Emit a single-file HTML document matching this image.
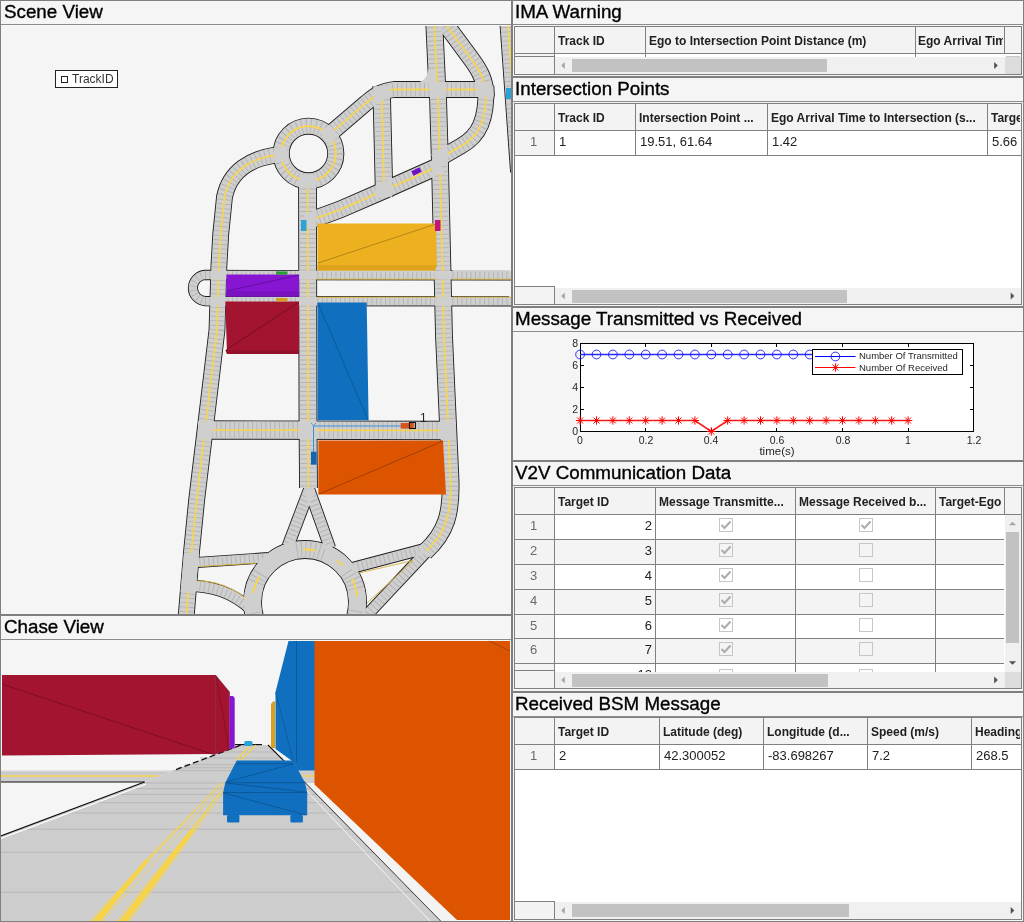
<!DOCTYPE html><html><head><meta charset="utf-8"><style>html,body{margin:0;padding:0;}body{width:1024px;height:922px;position:relative;overflow:hidden;background:#f5f5f5;font-family:"Liberation Sans",sans-serif;}div{box-sizing:border-box;}.t{position:absolute;white-space:nowrap;overflow:hidden;will-change:transform;padding-bottom:6px;}</style></head><body>
<svg style="position:absolute;left:0;top:0" width="1024" height="922"><defs><clipPath id="scl"><rect x="1" y="26" width="510" height="588"/></clipPath><mask id="m_T2" maskUnits="userSpaceOnUse" x="0" y="0" width="1024" height="922"><path d="M205,301.2 L512,301.3" fill="none" stroke="#fff" stroke-width="8.5"/></mask><mask id="m_R5" maskUnits="userSpaceOnUse" x="0" y="0" width="1024" height="922"><path d="M306,222 L340,209.6 L385,190 L441,165" fill="none" stroke="#fff" stroke-width="16"/></mask><mask id="m_TL" maskUnits="userSpaceOnUse" x="0" y="0" width="1024" height="922"><path d="M310,488 L288,546" fill="none" stroke="#fff" stroke-width="11"/></mask><mask id="m_U4" maskUnits="userSpaceOnUse" x="0" y="0" width="1024" height="922"><path d="M427,551 L366,616" fill="none" stroke="#fff" stroke-width="10.5"/></mask><mask id="m_T1" maskUnits="userSpaceOnUse" x="0" y="0" width="1024" height="922"><path d="M205,275 L512,275.3" fill="none" stroke="#fff" stroke-width="8.5"/></mask><mask id="m_R3b" maskUnits="userSpaceOnUse" x="0" y="0" width="1024" height="922"><path d="M486,86 C487,120 479,136 461,146 L435,161" fill="none" stroke="#fff" stroke-width="15"/></mask><mask id="m_R1" maskUnits="userSpaceOnUse" x="0" y="0" width="1024" height="922"><path d="M434,18 L437,82 L438,97 L440,165 L444,336 L450.5,480 C451.5,512 447,532 425,552" fill="none" stroke="#fff" stroke-width="16"/></mask><mask id="m_R7" maskUnits="userSpaceOnUse" x="0" y="0" width="1024" height="922"><path d="M198,430 L456,430.5" fill="none" stroke="#fff" stroke-width="17.5"/></mask><mask id="m_TR" maskUnits="userSpaceOnUse" x="0" y="0" width="1024" height="922"><path d="M308.6,488 L330,548" fill="none" stroke="#fff" stroke-width="10.5"/></mask><mask id="m_U1" maskUnits="userSpaceOnUse" x="0" y="0" width="1024" height="922"><path d="M186,563.2 L268,557.6" fill="none" stroke="#fff" stroke-width="9.2"/></mask><mask id="m_RB1" maskUnits="userSpaceOnUse" x="0" y="0" width="1024" height="922"><circle cx="308.5" cy="153.5" r="27.3" fill="none" stroke="#fff" stroke-width="15.3"/></mask><mask id="m_R3a" maskUnits="userSpaceOnUse" x="0" y="0" width="1024" height="922"><path d="M441,18 L472,60 C480,71 485,80 486,97" fill="none" stroke="#fff" stroke-width="16"/></mask><mask id="m_U3" maskUnits="userSpaceOnUse" x="0" y="0" width="1024" height="922"><path d="M424,549 L352,568" fill="none" stroke="#fff" stroke-width="10"/></mask><mask id="m_UT" maskUnits="userSpaceOnUse" x="0" y="0" width="1024" height="922"><path d="M206,274.9 A13.1,13.1 0 0 0 206,301.1" fill="none" stroke="#fff" stroke-width="8.3"/></mask><mask id="m_U2" maskUnits="userSpaceOnUse" x="0" y="0" width="1024" height="922"><path d="M186,586 C212,585.5 232,592 252,610" fill="none" stroke="#fff" stroke-width="10.5"/></mask><mask id="m_R4" maskUnits="userSpaceOnUse" x="0" y="0" width="1024" height="922"><path d="M381.5,86 L384.2,197" fill="none" stroke="#fff" stroke-width="16.5"/></mask></defs><g clip-path="url(#scl)"><rect x="1" y="25" width="510" height="589" fill="#f5f5f5"/><path d="M288,154 L273,155.5 C252,159 230,170 224.5,197 L220.7,234.5 L218.9,266 L217,330 L206.9,414.8 L196.7,499.6 L191.6,551 L186.6,611 L186.3,618" fill="none" stroke="#1e1e1e" stroke-width="16.8"/><circle cx="308.5" cy="153.5" r="27.3" fill="none" stroke="#1e1e1e" stroke-width="17.1"/><path d="M307.5,175 L308,420 L308.5,488" fill="none" stroke="#1e1e1e" stroke-width="18.8"/><path d="M310,488 L288,546" fill="none" stroke="#1e1e1e" stroke-width="12.8"/><path d="M308.6,488 L330,548" fill="none" stroke="#1e1e1e" stroke-width="12.3"/><path d="M324,139 L366,103 C374,96.5 380,91 394,89.5 L492,89.5" fill="none" stroke="#1e1e1e" stroke-width="16.8"/><path d="M434,18 L437,82 L438,97 L440,165 L444,336 L450.5,480 C451.5,512 447,532 425,552" fill="none" stroke="#1e1e1e" stroke-width="17.8"/><path d="M441,18 L472,60 C480,71 485,80 486,97" fill="none" stroke="#1e1e1e" stroke-width="17.8"/><path d="M486,86 C487,120 479,136 461,146 L435,161" fill="none" stroke="#1e1e1e" stroke-width="16.8"/><path d="M381.5,86 L384.2,197" fill="none" stroke="#1e1e1e" stroke-width="18.3"/><path d="M306,222 L340,209.6 L385,190 L441,165" fill="none" stroke="#1e1e1e" stroke-width="17.8"/><path d="M205,275 L512,275.3" fill="none" stroke="#1e1e1e" stroke-width="10.3"/><path d="M205,301.2 L512,301.3" fill="none" stroke="#1e1e1e" stroke-width="10.3"/><path d="M206,274.9 A13.1,13.1 0 0 0 206,301.1" fill="none" stroke="#1e1e1e" stroke-width="10.100000000000001"/><path d="M198,430 L456,430.5" fill="none" stroke="#1e1e1e" stroke-width="19.3"/><path d="M186,563.2 L268,557.6" fill="none" stroke="#1e1e1e" stroke-width="11.0"/><path d="M186,586 C212,585.5 232,592 252,610" fill="none" stroke="#1e1e1e" stroke-width="12.3"/><path d="M424,549 L352,568" fill="none" stroke="#1e1e1e" stroke-width="11.8"/><path d="M427,551 L366,616" fill="none" stroke="#1e1e1e" stroke-width="12.3"/><circle cx="305" cy="602" r="52.5" fill="none" stroke="#1e1e1e" stroke-width="18.8"/><path d="M507.5,18 L518.5,172" fill="none" stroke="#1e1e1e" stroke-width="16.8"/><path d="M288,154 L273,155.5 C252,159 230,170 224.5,197 L220.7,234.5 L218.9,266 L217,330 L206.9,414.8 L196.7,499.6 L191.6,551 L186.6,611 L186.3,618" fill="none" stroke="#cfcfcf" stroke-width="15"/><circle cx="308.5" cy="153.5" r="27.3" fill="none" stroke="#cfcfcf" stroke-width="15.3"/><path d="M307.5,175 L308,420 L308.5,488" fill="none" stroke="#cfcfcf" stroke-width="17"/><path d="M310,488 L288,546" fill="none" stroke="#cfcfcf" stroke-width="11"/><path d="M308.6,488 L330,548" fill="none" stroke="#cfcfcf" stroke-width="10.5"/><path d="M324,139 L366,103 C374,96.5 380,91 394,89.5 L492,89.5" fill="none" stroke="#cfcfcf" stroke-width="15"/><path d="M434,18 L437,82 L438,97 L440,165 L444,336 L450.5,480 C451.5,512 447,532 425,552" fill="none" stroke="#cfcfcf" stroke-width="16"/><path d="M441,18 L472,60 C480,71 485,80 486,97" fill="none" stroke="#cfcfcf" stroke-width="16"/><path d="M486,86 C487,120 479,136 461,146 L435,161" fill="none" stroke="#cfcfcf" stroke-width="15"/><path d="M381.5,86 L384.2,197" fill="none" stroke="#cfcfcf" stroke-width="16.5"/><path d="M306,222 L340,209.6 L385,190 L441,165" fill="none" stroke="#cfcfcf" stroke-width="16"/><path d="M205,275 L512,275.3" fill="none" stroke="#cfcfcf" stroke-width="8.5"/><path d="M205,301.2 L512,301.3" fill="none" stroke="#cfcfcf" stroke-width="8.5"/><path d="M206,274.9 A13.1,13.1 0 0 0 206,301.1" fill="none" stroke="#cfcfcf" stroke-width="8.3"/><path d="M198,430 L456,430.5" fill="none" stroke="#cfcfcf" stroke-width="17.5"/><path d="M186,563.2 L268,557.6" fill="none" stroke="#cfcfcf" stroke-width="9.2"/><path d="M186,586 C212,585.5 232,592 252,610" fill="none" stroke="#cfcfcf" stroke-width="10.5"/><path d="M424,549 L352,568" fill="none" stroke="#cfcfcf" stroke-width="10"/><path d="M427,551 L366,616" fill="none" stroke="#cfcfcf" stroke-width="10.5"/><circle cx="305" cy="602" r="52.5" fill="none" stroke="#cfcfcf" stroke-width="17"/><path d="M507.5,18 L518.5,172" fill="none" stroke="#cfcfcf" stroke-width="15"/><path d="M288,154 L273,155.5 C252,159 230,170 224.5,197 L220.7,234.5 L218.9,266 L217,330 L206.9,414.8 L196.7,499.6 L191.6,551 L186.6,611 L186.3,618" fill="none" stroke="#b3b3b3" stroke-width="14" stroke-dasharray="0.9 3.6"/><circle cx="308.5" cy="153.5" r="27.3" fill="none" stroke="#b3b3b3" stroke-width="14.3" stroke-dasharray="0.9 3.6"/><path d="M307.5,175 L308,420 L308.5,488" fill="none" stroke="#b3b3b3" stroke-width="16" stroke-dasharray="0.9 3.6"/><path d="M310,488 L288,546" fill="none" stroke="#b3b3b3" stroke-width="10" stroke-dasharray="0.9 3.6"/><path d="M308.6,488 L330,548" fill="none" stroke="#b3b3b3" stroke-width="9.5" stroke-dasharray="0.9 3.6"/><path d="M324,139 L366,103 C374,96.5 380,91 394,89.5 L492,89.5" fill="none" stroke="#b3b3b3" stroke-width="14" stroke-dasharray="0.9 3.6"/><path d="M434,18 L437,82 L438,97 L440,165 L444,336 L450.5,480 C451.5,512 447,532 425,552" fill="none" stroke="#b3b3b3" stroke-width="15" stroke-dasharray="0.9 3.6"/><path d="M441,18 L472,60 C480,71 485,80 486,97" fill="none" stroke="#b3b3b3" stroke-width="15" stroke-dasharray="0.9 3.6"/><path d="M486,86 C487,120 479,136 461,146 L435,161" fill="none" stroke="#b3b3b3" stroke-width="14" stroke-dasharray="0.9 3.6"/><path d="M381.5,86 L384.2,197" fill="none" stroke="#b3b3b3" stroke-width="15.5" stroke-dasharray="0.9 3.6"/><path d="M306,222 L340,209.6 L385,190 L441,165" fill="none" stroke="#b3b3b3" stroke-width="15" stroke-dasharray="0.9 3.6"/><path d="M205,275 L512,275.3" fill="none" stroke="#b3b3b3" stroke-width="7.5" stroke-dasharray="0.9 3.6"/><path d="M205,301.2 L512,301.3" fill="none" stroke="#b3b3b3" stroke-width="7.5" stroke-dasharray="0.9 3.6"/><path d="M206,274.9 A13.1,13.1 0 0 0 206,301.1" fill="none" stroke="#b3b3b3" stroke-width="7.300000000000001" stroke-dasharray="0.9 3.6"/><path d="M198,430 L456,430.5" fill="none" stroke="#b3b3b3" stroke-width="16.5" stroke-dasharray="0.9 3.6"/><path d="M186,563.2 L268,557.6" fill="none" stroke="#b3b3b3" stroke-width="8.2" stroke-dasharray="0.9 3.6"/><path d="M186,586 C212,585.5 232,592 252,610" fill="none" stroke="#b3b3b3" stroke-width="9.5" stroke-dasharray="0.9 3.6"/><path d="M424,549 L352,568" fill="none" stroke="#b3b3b3" stroke-width="9" stroke-dasharray="0.9 3.6"/><path d="M427,551 L366,616" fill="none" stroke="#b3b3b3" stroke-width="9.5" stroke-dasharray="0.9 3.6"/><circle cx="305" cy="602" r="52.5" fill="none" stroke="#b3b3b3" stroke-width="16" stroke-dasharray="0.9 3.6"/><path d="M507.5,18 L518.5,172" fill="none" stroke="#b3b3b3" stroke-width="14" stroke-dasharray="0.9 3.6"/><path d="M288,154 L273,155.5 C252,159 230,170 224.5,197 L220.7,234.5 L218.9,266 L217,330 L206.9,414.8 L196.7,499.6 L191.6,551 L186.6,611 L186.3,618" fill="none" stroke="#fad54a" stroke-width="1.8" stroke-dasharray="6 0.7"/><circle cx="308.5" cy="153.5" r="27.3" fill="none" stroke="#fad54a" stroke-width="1.8"/><path d="M307.5,175 L308,420 L308.5,488" fill="none" stroke="#fad54a" stroke-width="1.8" stroke-dasharray="6 0.7"/><path d="M324,139 L366,103 C374,96.5 380,91 394,89.5 L492,89.5" fill="none" stroke="#fad54a" stroke-width="1.8" stroke-dasharray="6 0.7"/><path d="M434,18 L437,82 L438,97 L440,165 L444,336 L450.5,480 C451.5,512 447,532 425,552" fill="none" stroke="#fad54a" stroke-width="1.8" stroke-dasharray="6 0.7"/><path d="M441,18 L472,60 C480,71 485,80 486,97" fill="none" stroke="#fad54a" stroke-width="1.8" stroke-dasharray="6 0.7"/><path d="M486,86 C487,120 479,136 461,146 L435,161" fill="none" stroke="#fad54a" stroke-width="1.8" stroke-dasharray="6 0.7"/><path d="M381.5,86 L384.2,197" fill="none" stroke="#fad54a" stroke-width="1.8" stroke-dasharray="6 0.7"/><path d="M306,222 L340,209.6 L385,190 L441,165" fill="none" stroke="#fad54a" stroke-width="1.8" stroke-dasharray="6 0.7"/><path d="M198,430 L456,430.5" fill="none" stroke="#fad54a" stroke-width="1.8" stroke-dasharray="6 0.7"/><path d="M507.5,18 L518.5,172" fill="none" stroke="#fad54a" stroke-width="1.8" stroke-dasharray="6 0.7"/><path d="M288,154 L273,155.5 C252,159 230,170 224.5,197 L220.7,234.5 L218.9,266 L217,330 L206.9,414.8 L196.7,499.6 L191.6,551 L186.6,611 L186.3,618" fill="none" stroke="#cfcfcf" stroke-width="15" mask="url(#m_RB1)"/><path d="M307.5,175 L308,420 L308.5,488" fill="none" stroke="#cfcfcf" stroke-width="17" mask="url(#m_RB1)"/><path d="M324,139 L366,103 C374,96.5 380,91 394,89.5 L492,89.5" fill="none" stroke="#cfcfcf" stroke-width="15" mask="url(#m_RB1)"/><path d="M324,139 L366,103 C374,96.5 380,91 394,89.5 L492,89.5" fill="none" stroke="#cfcfcf" stroke-width="15" mask="url(#m_R4)"/><path d="M324,139 L366,103 C374,96.5 380,91 394,89.5 L492,89.5" fill="none" stroke="#cfcfcf" stroke-width="15" mask="url(#m_R1)"/><path d="M324,139 L366,103 C374,96.5 380,91 394,89.5 L492,89.5" fill="none" stroke="#cfcfcf" stroke-width="15" mask="url(#m_R3a)"/><path d="M324,139 L366,103 C374,96.5 380,91 394,89.5 L492,89.5" fill="none" stroke="#cfcfcf" stroke-width="15" mask="url(#m_R3b)"/><path d="M441,18 L472,60 C480,71 485,80 486,97" fill="none" stroke="#cfcfcf" stroke-width="16" mask="url(#m_R3b)"/><path d="M434,18 L437,82 L438,97 L440,165 L444,336 L450.5,480 C451.5,512 447,532 425,552" fill="none" stroke="#cfcfcf" stroke-width="16" mask="url(#m_R3a)"/><path d="M434,18 L437,82 L438,97 L440,165 L444,336 L450.5,480 C451.5,512 447,532 425,552" fill="none" stroke="#cfcfcf" stroke-width="16" mask="url(#m_R3b)"/><path d="M434,18 L437,82 L438,97 L440,165 L444,336 L450.5,480 C451.5,512 447,532 425,552" fill="none" stroke="#cfcfcf" stroke-width="16" mask="url(#m_R5)"/><path d="M381.5,86 L384.2,197" fill="none" stroke="#cfcfcf" stroke-width="16.5" mask="url(#m_R5)"/><path d="M307.5,175 L308,420 L308.5,488" fill="none" stroke="#cfcfcf" stroke-width="17" mask="url(#m_R5)"/><path d="M288,154 L273,155.5 C252,159 230,170 224.5,197 L220.7,234.5 L218.9,266 L217,330 L206.9,414.8 L196.7,499.6 L191.6,551 L186.6,611 L186.3,618" fill="none" stroke="#cfcfcf" stroke-width="15" mask="url(#m_T1)"/><path d="M288,154 L273,155.5 C252,159 230,170 224.5,197 L220.7,234.5 L218.9,266 L217,330 L206.9,414.8 L196.7,499.6 L191.6,551 L186.6,611 L186.3,618" fill="none" stroke="#cfcfcf" stroke-width="15" mask="url(#m_T2)"/><path d="M288,154 L273,155.5 C252,159 230,170 224.5,197 L220.7,234.5 L218.9,266 L217,330 L206.9,414.8 L196.7,499.6 L191.6,551 L186.6,611 L186.3,618" fill="none" stroke="#cfcfcf" stroke-width="15" mask="url(#m_UT)"/><path d="M307.5,175 L308,420 L308.5,488" fill="none" stroke="#cfcfcf" stroke-width="17" mask="url(#m_T1)"/><path d="M307.5,175 L308,420 L308.5,488" fill="none" stroke="#cfcfcf" stroke-width="17" mask="url(#m_T2)"/><path d="M434,18 L437,82 L438,97 L440,165 L444,336 L450.5,480 C451.5,512 447,532 425,552" fill="none" stroke="#cfcfcf" stroke-width="16" mask="url(#m_T1)"/><path d="M434,18 L437,82 L438,97 L440,165 L444,336 L450.5,480 C451.5,512 447,532 425,552" fill="none" stroke="#cfcfcf" stroke-width="16" mask="url(#m_T2)"/><path d="M288,154 L273,155.5 C252,159 230,170 224.5,197 L220.7,234.5 L218.9,266 L217,330 L206.9,414.8 L196.7,499.6 L191.6,551 L186.6,611 L186.3,618" fill="none" stroke="#cfcfcf" stroke-width="15" mask="url(#m_R7)"/><path d="M307.5,175 L308,420 L308.5,488" fill="none" stroke="#cfcfcf" stroke-width="17" mask="url(#m_R7)"/><path d="M434,18 L437,82 L438,97 L440,165 L444,336 L450.5,480 C451.5,512 447,532 425,552" fill="none" stroke="#cfcfcf" stroke-width="16" mask="url(#m_R7)"/><path d="M288,154 L273,155.5 C252,159 230,170 224.5,197 L220.7,234.5 L218.9,266 L217,330 L206.9,414.8 L196.7,499.6 L191.6,551 L186.6,611 L186.3,618" fill="none" stroke="#cfcfcf" stroke-width="15" mask="url(#m_U1)"/><path d="M288,154 L273,155.5 C252,159 230,170 224.5,197 L220.7,234.5 L218.9,266 L217,330 L206.9,414.8 L196.7,499.6 L191.6,551 L186.6,611 L186.3,618" fill="none" stroke="#cfcfcf" stroke-width="15" mask="url(#m_U2)"/><path d="M434,18 L437,82 L438,97 L440,165 L444,336 L450.5,480 C451.5,512 447,532 425,552" fill="none" stroke="#cfcfcf" stroke-width="16" mask="url(#m_U3)"/><path d="M434,18 L437,82 L438,97 L440,165 L444,336 L450.5,480 C451.5,512 447,532 425,552" fill="none" stroke="#cfcfcf" stroke-width="16" mask="url(#m_U4)"/><path d="M424,549 L352,568" fill="none" stroke="#cfcfcf" stroke-width="10" mask="url(#m_U4)"/><path d="M307.5,175 L308,420 L308.5,488" fill="none" stroke="#cfcfcf" stroke-width="17" mask="url(#m_TL)"/><path d="M307.5,175 L308,420 L308.5,488" fill="none" stroke="#cfcfcf" stroke-width="17" mask="url(#m_TR)"/><path d="M310,488 L288,546" fill="none" stroke="#cfcfcf" stroke-width="11" mask="url(#m_TR)"/><circle cx="305" cy="602" r="52.5" fill="none" stroke="#cfcfcf" stroke-width="17" mask="url(#m_TL)"/><circle cx="305" cy="602" r="52.5" fill="none" stroke="#cfcfcf" stroke-width="17" mask="url(#m_TR)"/><circle cx="305" cy="602" r="52.5" fill="none" stroke="#cfcfcf" stroke-width="17" mask="url(#m_U1)"/><circle cx="305" cy="602" r="52.5" fill="none" stroke="#cfcfcf" stroke-width="17" mask="url(#m_U2)"/><circle cx="305" cy="602" r="52.5" fill="none" stroke="#cfcfcf" stroke-width="17" mask="url(#m_U3)"/><circle cx="305" cy="602" r="52.5" fill="none" stroke="#cfcfcf" stroke-width="17" mask="url(#m_U4)"/><polygon points="184,553 199,553 195.5,592 180.5,592" fill="#cfcfcf"/><path d="M415,83 Q427,82 428.5,69 L436,69 L436,83 Z" fill="#cfcfcf"/><path d="M261.48,572.64 A52.5,52.5 0 0 1 295.88,550.30" fill="none" stroke="#cfcfcf" stroke-width="17"/><path d="M326.35,554.04 A52.5,52.5 0 0 1 347.47,571.14" fill="none" stroke="#cfcfcf" stroke-width="17"/><path d="M253.65,612.92 A52.5,52.5 0 0 1 255.07,585.78" fill="none" stroke="#cfcfcf" stroke-width="17"/><path d="M355.94,589.30 A52.5,52.5 0 0 1 356.99,609.31" fill="none" stroke="#cfcfcf" stroke-width="17"/><path d="M303.17,549.53 A52.5,52.5 0 0 1 315.92,550.65" fill="none" stroke="#fad54a" stroke-width="1.8"/><path d="M337.32,560.63 A52.5,52.5 0 0 1 342.77,565.53" fill="none" stroke="#fad54a" stroke-width="1.8"/><path d="M351.78,578.17 A52.5,52.5 0 0 1 357.21,596.51" fill="none" stroke="#fad54a" stroke-width="1.8"/><path d="M253.30,592.88 A52.5,52.5 0 0 1 259.08,576.55" fill="none" stroke="#fad54a" stroke-width="1.8"/><path d="M199,566.6 L256,563.2 M359,573 L413,560.5 M367,603 L413,561" stroke="#d9b23a" stroke-width="0.9" fill="none"/><path d="M317,270.6 L435,270.6 M452.5,270.6 L512,270.6" stroke="#e2e2e2" stroke-width="1" fill="none"/><path d="M317,279.2 L436,279.2 M452,279.2 L512,279.2 M317,297.2 L437,297.2 M453,297.2 L512,297.2" stroke="#d9b23a" stroke-width="0.9" fill="none"/><path d="M197,581 C214,580.5 234,587 247,600" stroke="#fad54a" stroke-width="0.8" fill="none"/><polygon points="317.5,223.5 436,223.5 437,265 435,270.5 317.5,270.5" fill="#EDB120"/><polygon points="317.5,265 437,265 435,270.5 317.5,270.5" fill="#DDA31A"/><line x1="436" y1="224" x2="318" y2="263" stroke="#8a6a10" stroke-width="0.6"/><polygon points="226.3,274.6 299.1,274.6 299.1,296.6 226.3,296.6" fill="#8716D3"/><polygon points="226.3,291.2 299.1,291.2 299.1,296.6 226.3,296.6" fill="#7A12C0"/><line x1="299" y1="275" x2="227" y2="291" stroke="#4a0a80" stroke-width="0.6"/><polygon points="225.3,301.5 299,301.5 299,354 227,354" fill="#A2142F"/><polygon points="225.3,350 299,350 299,354 227,354" fill="#94112A"/><line x1="299" y1="302" x2="226" y2="350" stroke="#5a0a18" stroke-width="0.6"/><polygon points="317.5,302.4 366.7,302.4 368.6,420.3 317.5,420.3" fill="#1070BF"/><line x1="318" y1="303" x2="368" y2="420" stroke="#0a4a80" stroke-width="0.6"/><polygon points="318.4,440.6 443,440.6 446,494.6 318.3,494.6" fill="#DC5400"/><line x1="443" y1="441" x2="319" y2="494" stroke="#7a3000" stroke-width="0.6"/><rect x="301" y="220" width="5.5" height="11" fill="#2aa3d9"/><rect x="435" y="220" width="5.5" height="11" fill="#c0157a"/><rect x="412" y="169" width="9" height="5" fill="#7010c8" transform="rotate(-25 416.5 171.5)"/><rect x="276" y="271.4" width="11.5" height="3.3" fill="#2f9a3a"/><rect x="276" y="298" width="11.5" height="3.4" fill="#d4a020"/><rect x="506" y="88" width="5" height="11" fill="#2aa3d9"/><path d="M313.5,452 L313.5,426 L401,426" fill="none" stroke="#3d8fd8" stroke-width="1"/><path d="M311,423 L313.5,426 L316,423" fill="none" stroke="#3d8fd8" stroke-width="0.8"/><rect x="311" y="451.7" width="5.6" height="13" fill="#1464b4"/><rect x="400.8" y="423" width="13" height="5.6" fill="#d95319"/><rect x="409.5" y="422.5" width="6" height="6" fill="none" stroke="#111" stroke-width="1.1"/></g></svg>
<div class="t" style="left:420px;top:412px;font-size:12px;line-height:12px;color:#222">1</div>
<div style="position:absolute;left:55px;top:70px;width:63px;height:18px;background:#fff;border:1px solid #222"></div>
<div style="position:absolute;left:61px;top:76px;width:7px;height:7px;border:1px solid #222"></div>
<div class="t" style="left:72px;top:72.5px;font-size:12px;line-height:12px;color:#333">TrackID</div>
<svg style="position:absolute;left:0;top:0" width="1024" height="922"><defs><clipPath id="ccl"><rect x="1" y="640" width="510" height="281"/></clipPath></defs><g clip-path="url(#ccl)"><rect x="1" y="640" width="510" height="281" fill="#f5f5f5"/><polygon points="1,770.6 173.4,770.6 144.5,782 1,782" fill="#cdcdcd" /><line x1="1" y1="776" x2="158.6" y2="776" stroke="#f7d34a" stroke-width="1.3"/><line x1="1" y1="771" x2="172" y2="771" stroke="#e2e2e2" stroke-width="0.8"/><line x1="1" y1="772.8" x2="168" y2="772.8" stroke="#bdbdbd" stroke-width="0.6"/><polygon points="235,745 268,745 306,783 441,921 1,921 1,836 144.5,782 173.4,770.6 240.6,745.2" fill="#cdcdcd" /><line x1="215" y1="752" x2="276" y2="752" stroke="#b6b6b6" stroke-width="0.9"/><line x1="200" y1="758" x2="283" y2="758" stroke="#b6b6b6" stroke-width="0.9"/><line x1="185" y1="764.7" x2="289" y2="764.7" stroke="#b6b6b6" stroke-width="0.9"/><line x1="178" y1="767.8" x2="292" y2="767.8" stroke="#b6b6b6" stroke-width="0.9"/><line x1="173" y1="770.6" x2="296" y2="770.6" stroke="#b6b6b6" stroke-width="0.9"/><line x1="144" y1="783" x2="306" y2="783" stroke="#b6b6b6" stroke-width="0.9"/><line x1="130" y1="788.6" x2="311" y2="788.6" stroke="#b6b6b6" stroke-width="0.9"/><line x1="115" y1="794.4" x2="317" y2="794.4" stroke="#b6b6b6" stroke-width="0.9"/><line x1="92" y1="802.7" x2="325" y2="802.7" stroke="#b6b6b6" stroke-width="0.9"/><line x1="64" y1="813" x2="335" y2="813" stroke="#b6b6b6" stroke-width="0.9"/><line x1="20" y1="829.2" x2="351" y2="829.2" stroke="#b6b6b6" stroke-width="0.9"/><line x1="1" y1="852.3" x2="374" y2="852.3" stroke="#b6b6b6" stroke-width="0.9"/><line x1="1" y1="892.2" x2="413" y2="892.2" stroke="#b6b6b6" stroke-width="0.9"/><path d="M240.6,745.2 L173.4,770.6" fill="none" stroke="#111" stroke-width="1.3" stroke-dasharray="6 3"/><path d="M144.5,782 L1,782" fill="none" stroke="#111" stroke-width="1.2"/><path d="M144.5,782 L1,836" fill="none" stroke="#111" stroke-width="1.3"/><path d="M146,784 L1,838.5" fill="none" stroke="#fff" stroke-width="1.2"/><path d="M235,744.6 L262,744.6" fill="none" stroke="#111" stroke-width="1.2"/><path d="M268,745 L306,783 L441,921" fill="none" stroke="#111" stroke-width="1.1"/><path d="M302,786 L430,921" fill="none" stroke="#f5f5f5" stroke-width="1"/><polygon points="89.4,921 103.4,921 223,784 220.6,783" fill="none" stroke="#f7d34a" stroke-width="0.8"/><polygon points="116,921 130,921 225,790 223.7,789.4" fill="none" stroke="#f7d34a" stroke-width="0.8"/><polygon points="92,921 101,921 150,860 145,860" fill="#f7d34a"/><polygon points="119,921 128,921 195,830 190,830" fill="#f7d34a"/><polygon points="190,830 195,830 222,790 221,790" fill="#f7d34a" opacity="0.6"/><polygon points="145,860 150,860 221,784 220,784" fill="#f7d34a" opacity="0.5"/><path d="M241,760 L256,745 M236,760 L251,745" stroke="#f7d34a" stroke-width="1.2" fill="none"/><polygon points="2,675 215.5,675 215.5,754 2,755.5" fill="#A2142F" /><polygon points="215.5,675 229.5,692 229.5,749.5 215.5,754" fill="#A2142F" stroke="#6a0c1e" stroke-width="0.5"/><line x1="2" y1="684" x2="215" y2="755" stroke="#6a0c1e" stroke-width="0.6"/><line x1="216" y1="676" x2="229" y2="749" stroke="#6a0c1e" stroke-width="0.5"/><polygon points="229.5,696 233,696 234.7,698 234.7,748.5 229.5,748.5" fill="#8716D3" /><polygon points="271,704 273,701.5 275,701.5 275,748 271,748" fill="#D9A01A" /><rect x="244.3" y="741" width="8.2" height="5" rx="1.5" fill="#2aa3d9"/><polygon points="288.5,641 315,641 315,771 298,771 293.5,762 275.5,749 275.5,692" fill="#1070BF" /><line x1="296.5" y1="641" x2="296.5" y2="762" stroke="#0a4a80" stroke-width="0.6"/><line x1="275.5" y1="692" x2="293.5" y2="762" stroke="#0a4a80" stroke-width="0.5"/><polygon points="293,770.5 315,770.5 315,783 306,783" fill="#cdcdcd" /><line x1="299" y1="776" x2="315" y2="776" stroke="#f7d34a" stroke-width="1.3"/><polygon points="306,783 315,783 315,785 457,921 441,921" fill="#f3f3f3" /><polygon points="314.5,641 510,641 510,920 457,920 314.5,784.5" fill="#DC5400" /><line x1="489" y1="641" x2="510" y2="651" stroke="#7a3000" stroke-width="0.5"/><polygon points="236.7,760.5 293.1,760.5 305,782.7 307.2,792.5 307.2,815.3 223.1,815.3 223.1,792.5 225.3,782.7" fill="#1070BF" /><path d="M236.7,763.7 L293.1,763.7 M225.3,782.7 L305,782.7 M223.1,792.5 L307.2,792.5 M293,764 L226,782 M226,783 L306,792 M223.5,793 L306,815" stroke="#0a4a80" stroke-width="0.6" fill="none"/><rect x="227" y="815" width="12.4" height="7.5" rx="1.2" fill="#1070BF"/><rect x="290.4" y="815" width="12.5" height="7.5" rx="1.2" fill="#1070BF"/></g></svg>
<svg style="position:absolute;left:0;top:0" width="1024" height="922"><rect x="580.5" y="343.5" width="393" height="88" fill="#fff" stroke="#000" stroke-width="1"/><line x1="580.5" y1="431.5" x2="580.5" y2="428" stroke="#000" stroke-width="1"/><line x1="580.5" y1="343.5" x2="580.5" y2="347" stroke="#000" stroke-width="1"/><line x1="645.5" y1="431.5" x2="645.5" y2="428" stroke="#000" stroke-width="1"/><line x1="645.5" y1="343.5" x2="645.5" y2="347" stroke="#000" stroke-width="1"/><line x1="711.5" y1="431.5" x2="711.5" y2="428" stroke="#000" stroke-width="1"/><line x1="711.5" y1="343.5" x2="711.5" y2="347" stroke="#000" stroke-width="1"/><line x1="776.5" y1="431.5" x2="776.5" y2="428" stroke="#000" stroke-width="1"/><line x1="776.5" y1="343.5" x2="776.5" y2="347" stroke="#000" stroke-width="1"/><line x1="842.5" y1="431.5" x2="842.5" y2="428" stroke="#000" stroke-width="1"/><line x1="842.5" y1="343.5" x2="842.5" y2="347" stroke="#000" stroke-width="1"/><line x1="908.5" y1="431.5" x2="908.5" y2="428" stroke="#000" stroke-width="1"/><line x1="908.5" y1="343.5" x2="908.5" y2="347" stroke="#000" stroke-width="1"/><line x1="973.5" y1="431.5" x2="973.5" y2="428" stroke="#000" stroke-width="1"/><line x1="973.5" y1="343.5" x2="973.5" y2="347" stroke="#000" stroke-width="1"/><line x1="580.5" y1="431.5" x2="584" y2="431.5" stroke="#000" stroke-width="1"/><line x1="973.5" y1="431.5" x2="970" y2="431.5" stroke="#000" stroke-width="1"/><line x1="580.5" y1="409.5" x2="584" y2="409.5" stroke="#000" stroke-width="1"/><line x1="973.5" y1="409.5" x2="970" y2="409.5" stroke="#000" stroke-width="1"/><line x1="580.5" y1="387.5" x2="584" y2="387.5" stroke="#000" stroke-width="1"/><line x1="973.5" y1="387.5" x2="970" y2="387.5" stroke="#000" stroke-width="1"/><line x1="580.5" y1="365.5" x2="584" y2="365.5" stroke="#000" stroke-width="1"/><line x1="973.5" y1="365.5" x2="970" y2="365.5" stroke="#000" stroke-width="1"/><line x1="580.5" y1="343.5" x2="584" y2="343.5" stroke="#000" stroke-width="1"/><line x1="973.5" y1="343.5" x2="970" y2="343.5" stroke="#000" stroke-width="1"/><polyline points="580.10,354.50 596.50,354.50 612.90,354.50 629.30,354.50 645.70,354.50 662.10,354.50 678.50,354.50 694.90,354.50 711.30,354.50 727.70,354.50 744.10,354.50 760.50,354.50 776.90,354.50 793.30,354.50 809.70,354.50 826.10,354.50 842.50,354.50 858.90,354.50 875.30,354.50 891.70,354.50 908.10,354.50" fill="none" stroke="#2a2aff" stroke-width="1.7"/><circle cx="580.10" cy="354.50" r="4.4" fill="none" stroke="#1a1aff" stroke-width="0.9"/><circle cx="596.50" cy="354.50" r="4.4" fill="none" stroke="#1a1aff" stroke-width="0.9"/><circle cx="612.90" cy="354.50" r="4.4" fill="none" stroke="#1a1aff" stroke-width="0.9"/><circle cx="629.30" cy="354.50" r="4.4" fill="none" stroke="#1a1aff" stroke-width="0.9"/><circle cx="645.70" cy="354.50" r="4.4" fill="none" stroke="#1a1aff" stroke-width="0.9"/><circle cx="662.10" cy="354.50" r="4.4" fill="none" stroke="#1a1aff" stroke-width="0.9"/><circle cx="678.50" cy="354.50" r="4.4" fill="none" stroke="#1a1aff" stroke-width="0.9"/><circle cx="694.90" cy="354.50" r="4.4" fill="none" stroke="#1a1aff" stroke-width="0.9"/><circle cx="711.30" cy="354.50" r="4.4" fill="none" stroke="#1a1aff" stroke-width="0.9"/><circle cx="727.70" cy="354.50" r="4.4" fill="none" stroke="#1a1aff" stroke-width="0.9"/><circle cx="744.10" cy="354.50" r="4.4" fill="none" stroke="#1a1aff" stroke-width="0.9"/><circle cx="760.50" cy="354.50" r="4.4" fill="none" stroke="#1a1aff" stroke-width="0.9"/><circle cx="776.90" cy="354.50" r="4.4" fill="none" stroke="#1a1aff" stroke-width="0.9"/><circle cx="793.30" cy="354.50" r="4.4" fill="none" stroke="#1a1aff" stroke-width="0.9"/><circle cx="809.70" cy="354.50" r="4.4" fill="none" stroke="#1a1aff" stroke-width="0.9"/><circle cx="826.10" cy="354.50" r="4.4" fill="none" stroke="#1a1aff" stroke-width="0.9"/><circle cx="842.50" cy="354.50" r="4.4" fill="none" stroke="#1a1aff" stroke-width="0.9"/><circle cx="858.90" cy="354.50" r="4.4" fill="none" stroke="#1a1aff" stroke-width="0.9"/><circle cx="875.30" cy="354.50" r="4.4" fill="none" stroke="#1a1aff" stroke-width="0.9"/><circle cx="891.70" cy="354.50" r="4.4" fill="none" stroke="#1a1aff" stroke-width="0.9"/><circle cx="908.10" cy="354.50" r="4.4" fill="none" stroke="#1a1aff" stroke-width="0.9"/><polyline points="580.10,420.50 596.50,420.50 612.90,420.50 629.30,420.50 645.70,420.50 662.10,420.50 678.50,420.50 694.90,420.50 711.30,431.50 727.70,420.50 744.10,420.50 760.50,420.50 776.90,420.50 793.30,420.50 809.70,420.50 826.10,420.50 842.50,420.50 858.90,420.50 875.30,420.50 891.70,420.50 908.10,420.50" fill="none" stroke="#ff1a1a" stroke-width="1.6"/><path d="M575.9 420.5H584.3000000000001M580.1 416.3V424.7M577.1306000000001 417.5306L583.0694 423.4694M577.1306000000001 423.4694L583.0694 417.5306" stroke="#ff0000" stroke-width="1.0" fill="none"/><path d="M592.3 420.5H600.7M596.5 416.3V424.7M593.5306 417.5306L599.4694 423.4694M593.5306 423.4694L599.4694 417.5306" stroke="#ff0000" stroke-width="1.0" fill="none"/><path d="M608.6999999999999 420.5H617.1M612.9 416.3V424.7M609.9306 417.5306L615.8693999999999 423.4694M609.9306 423.4694L615.8693999999999 417.5306" stroke="#ff0000" stroke-width="1.0" fill="none"/><path d="M625.1 420.5H633.5000000000001M629.3000000000001 416.3V424.7M626.3306000000001 417.5306L632.2694 423.4694M626.3306000000001 423.4694L632.2694 417.5306" stroke="#ff0000" stroke-width="1.0" fill="none"/><path d="M641.5 420.5H649.9000000000001M645.7 416.3V424.7M642.7306000000001 417.5306L648.6694 423.4694M642.7306000000001 423.4694L648.6694 417.5306" stroke="#ff0000" stroke-width="1.0" fill="none"/><path d="M657.9 420.5H666.3000000000001M662.1 416.3V424.7M659.1306000000001 417.5306L665.0694 423.4694M659.1306000000001 423.4694L665.0694 417.5306" stroke="#ff0000" stroke-width="1.0" fill="none"/><path d="M674.3 420.5H682.7M678.5 416.3V424.7M675.5306 417.5306L681.4694 423.4694M675.5306 423.4694L681.4694 417.5306" stroke="#ff0000" stroke-width="1.0" fill="none"/><path d="M690.7 420.5H699.1000000000001M694.9000000000001 416.3V424.7M691.9306000000001 417.5306L697.8694 423.4694M691.9306000000001 423.4694L697.8694 417.5306" stroke="#ff0000" stroke-width="1.0" fill="none"/><path d="M707.1 431.5H715.5000000000001M711.3000000000001 427.3V435.7M708.3306000000001 428.5306L714.2694 434.4694M708.3306000000001 434.4694L714.2694 428.5306" stroke="#ff0000" stroke-width="1.0" fill="none"/><path d="M723.5 420.5H731.9000000000001M727.7 416.3V424.7M724.7306000000001 417.5306L730.6694 423.4694M724.7306000000001 423.4694L730.6694 417.5306" stroke="#ff0000" stroke-width="1.0" fill="none"/><path d="M739.9 420.5H748.3000000000001M744.1 416.3V424.7M741.1306000000001 417.5306L747.0694 423.4694M741.1306000000001 423.4694L747.0694 417.5306" stroke="#ff0000" stroke-width="1.0" fill="none"/><path d="M756.3 420.5H764.7M760.5 416.3V424.7M757.5306 417.5306L763.4694 423.4694M757.5306 423.4694L763.4694 417.5306" stroke="#ff0000" stroke-width="1.0" fill="none"/><path d="M772.7 420.5H781.1000000000001M776.9000000000001 416.3V424.7M773.9306000000001 417.5306L779.8694 423.4694M773.9306000000001 423.4694L779.8694 417.5306" stroke="#ff0000" stroke-width="1.0" fill="none"/><path d="M789.1 420.5H797.5000000000001M793.3000000000001 416.3V424.7M790.3306000000001 417.5306L796.2694 423.4694M790.3306000000001 423.4694L796.2694 417.5306" stroke="#ff0000" stroke-width="1.0" fill="none"/><path d="M805.5 420.5H813.9000000000001M809.7 416.3V424.7M806.7306000000001 417.5306L812.6694 423.4694M806.7306000000001 423.4694L812.6694 417.5306" stroke="#ff0000" stroke-width="1.0" fill="none"/><path d="M821.9 420.5H830.3000000000001M826.1 416.3V424.7M823.1306000000001 417.5306L829.0694 423.4694M823.1306000000001 423.4694L829.0694 417.5306" stroke="#ff0000" stroke-width="1.0" fill="none"/><path d="M838.3 420.5H846.7M842.5 416.3V424.7M839.5306 417.5306L845.4694 423.4694M839.5306 423.4694L845.4694 417.5306" stroke="#ff0000" stroke-width="1.0" fill="none"/><path d="M854.7 420.5H863.1000000000001M858.9000000000001 416.3V424.7M855.9306000000001 417.5306L861.8694 423.4694M855.9306000000001 423.4694L861.8694 417.5306" stroke="#ff0000" stroke-width="1.0" fill="none"/><path d="M871.0999999999999 420.5H879.5M875.3 416.3V424.7M872.3306 417.5306L878.2693999999999 423.4694M872.3306 423.4694L878.2693999999999 417.5306" stroke="#ff0000" stroke-width="1.0" fill="none"/><path d="M887.5 420.5H895.9000000000001M891.7 416.3V424.7M888.7306000000001 417.5306L894.6694 423.4694M888.7306000000001 423.4694L894.6694 417.5306" stroke="#ff0000" stroke-width="1.0" fill="none"/><path d="M903.9 420.5H912.3000000000001M908.1 416.3V424.7M905.1306000000001 417.5306L911.0694 423.4694M905.1306000000001 423.4694L911.0694 417.5306" stroke="#ff0000" stroke-width="1.0" fill="none"/><rect x="812.5" y="349.5" width="150" height="25" fill="#fff" stroke="#000" stroke-width="1"/><line x1="815" y1="356.5" x2="855.5" y2="356.5" stroke="#0000ff" stroke-width="1.2"/><circle cx="835.4" cy="356.5" r="4.4" fill="none" stroke="#1a1aff" stroke-width="0.9"/><line x1="815" y1="367.5" x2="855.5" y2="367.5" stroke="#ff0000" stroke-width="1.2"/><path d="M831.1999999999999 367.5H839.6M835.4 363.3V371.7M832.4306 364.5306L838.3693999999999 370.4694M832.4306 370.4694L838.3693999999999 364.5306" stroke="#ff0000" stroke-width="1.0" fill="none"/></svg>
<div class="t" style="left:550.10px;top:434.91px;width:60px;font-size:10.5px;line-height:10.5px;color:#262626;text-align:center">0</div>
<div class="t" style="left:615.70px;top:434.91px;width:60px;font-size:10.5px;line-height:10.5px;color:#262626;text-align:center">0.2</div>
<div class="t" style="left:681.30px;top:434.91px;width:60px;font-size:10.5px;line-height:10.5px;color:#262626;text-align:center">0.4</div>
<div class="t" style="left:746.90px;top:434.91px;width:60px;font-size:10.5px;line-height:10.5px;color:#262626;text-align:center">0.6</div>
<div class="t" style="left:812.50px;top:434.91px;width:60px;font-size:10.5px;line-height:10.5px;color:#262626;text-align:center">0.8</div>
<div class="t" style="left:878.10px;top:434.91px;width:60px;font-size:10.5px;line-height:10.5px;color:#262626;text-align:center">1</div>
<div class="t" style="left:943.70px;top:434.91px;width:60px;font-size:10.5px;line-height:10.5px;color:#262626;text-align:center">1.2</div>
<div class="t" style="left:518.00px;top:426.31px;width:60px;font-size:10.5px;line-height:10.5px;color:#262626;text-align:right">0</div>
<div class="t" style="left:518.00px;top:404.31px;width:60px;font-size:10.5px;line-height:10.5px;color:#262626;text-align:right">2</div>
<div class="t" style="left:518.00px;top:382.31px;width:60px;font-size:10.5px;line-height:10.5px;color:#262626;text-align:right">4</div>
<div class="t" style="left:518.00px;top:360.31px;width:60px;font-size:10.5px;line-height:10.5px;color:#262626;text-align:right">6</div>
<div class="t" style="left:518.00px;top:338.31px;width:60px;font-size:10.5px;line-height:10.5px;color:#262626;text-align:right">8</div>
<div class="t" style="left:746.50px;top:445.77px;width:60px;font-size:11.5px;line-height:11.5px;color:#262626;text-align:center">time(s)</div>
<div class="t" style="left:859.30px;top:350.96px;width:120px;font-size:9.5px;line-height:9.5px;color:#262626;text-align:left">Number Of Transmitted</div>
<div class="t" style="left:859.30px;top:362.76px;width:120px;font-size:9.5px;line-height:9.5px;color:#262626;text-align:left">Number Of Received</div>
<div style="position:absolute;left:514px;top:26px;width:508px;height:49px;background:#ffffff;"></div>
<div style="position:absolute;left:514px;top:26px;width:508px;height:1px;background:#808080;"></div>
<div style="position:absolute;left:514px;top:74px;width:508px;height:1px;background:#808080;"></div>
<div style="position:absolute;left:514px;top:26px;width:1px;height:49px;background:#808080;"></div>
<div style="position:absolute;left:1021px;top:26px;width:1px;height:49px;background:#808080;"></div>
<div style="position:absolute;left:515px;top:27px;width:506px;height:26px;background:#f3f3f3;"></div>
<div style="position:absolute;left:515px;top:27px;width:39px;height:47px;background:#f3f3f3;"></div>
<div style="position:absolute;left:515px;top:53px;width:506px;height:1px;background:#808080;"></div>
<div style="position:absolute;left:515px;top:56px;width:39px;height:1px;background:#808080;"></div>
<div style="position:absolute;left:555px;top:57px;width:466px;height:17px;background:#f0f0f0;"></div>
<svg style="position:absolute;left:0;top:0;pointer-events:none" width="1024" height="922"><polygon points="564.8,61.9 564.8,69.1 561.2,65.5" fill="#a6a6a6"/></svg>
<div style="position:absolute;left:572px;top:59px;width:255px;height:13px;background:#c2c2c2;"></div>
<div style="position:absolute;left:1005px;top:57px;width:16px;height:17px;background:#dcdcdc;"></div>
<svg style="position:absolute;left:0;top:0;pointer-events:none" width="1024" height="922"><polygon points="994.2,61.9 994.2,69.1 997.8,65.5" fill="#505050"/></svg>
<div style="position:absolute;left:554px;top:26px;width:1px;height:49px;background:#808080;"></div>
<div style="position:absolute;left:645px;top:26px;width:1px;height:31px;background:#808080;"></div>
<div style="position:absolute;left:915px;top:26px;width:1px;height:31px;background:#808080;"></div>
<div style="position:absolute;left:1004px;top:26px;width:1px;height:28px;background:#808080;"></div>
<div style="position:absolute;left:1006px;top:56px;width:14px;height:1px;background:#c8c8c8;"></div>
<div class="t" style="left:558px;top:34.84px;font-size:12px;line-height:12px;color:#212121;font-weight:bold;text-align:left;">Track ID</div>
<div class="t" style="left:649px;top:34.84px;font-size:12px;line-height:12px;color:#212121;font-weight:bold;text-align:left;">Ego to Intersection Point Distance (m)</div>
<div class="t" style="left:918px;top:34.84px;width:85px;font-size:12px;line-height:12px;color:#212121;font-weight:bold;text-align:left;">Ego Arrival Time to Intersection</div>
<div style="position:absolute;left:514px;top:103px;width:508px;height:202px;background:#ffffff;"></div>
<div style="position:absolute;left:514px;top:103px;width:508px;height:1px;background:#808080;"></div>
<div style="position:absolute;left:514px;top:304px;width:508px;height:1px;background:#808080;"></div>
<div style="position:absolute;left:514px;top:103px;width:1px;height:202px;background:#808080;"></div>
<div style="position:absolute;left:1021px;top:103px;width:1px;height:202px;background:#808080;"></div>
<div style="position:absolute;left:515px;top:104px;width:506px;height:26px;background:#f3f3f3;"></div>
<div style="position:absolute;left:515px;top:130px;width:506px;height:1px;background:#808080;"></div>
<div style="position:absolute;left:515px;top:131px;width:39px;height:24px;background:#f3f3f3;"></div>
<div style="position:absolute;left:515px;top:155px;width:506px;height:1px;background:#808080;"></div>
<div style="position:absolute;left:554px;top:103px;width:1px;height:53px;background:#808080;"></div>
<div style="position:absolute;left:635px;top:103px;width:1px;height:53px;background:#808080;"></div>
<div style="position:absolute;left:767px;top:103px;width:1px;height:53px;background:#808080;"></div>
<div style="position:absolute;left:987px;top:103px;width:1px;height:53px;background:#808080;"></div>
<div style="position:absolute;left:555px;top:288px;width:466px;height:16px;background:#f0f0f0;"></div>
<svg style="position:absolute;left:0;top:0;pointer-events:none" width="1024" height="922"><polygon points="564.8,292.4 564.8,299.6 561.2,296.0" fill="#a6a6a6"/></svg>
<div style="position:absolute;left:572px;top:290px;width:275px;height:13px;background:#c2c2c2;"></div>
<svg style="position:absolute;left:0;top:0;pointer-events:none" width="1024" height="922"><polygon points="1010.7,292.4 1010.7,299.6 1014.3,296.0" fill="#505050"/></svg>
<div style="position:absolute;left:515px;top:287px;width:39px;height:17px;background:#f3f3f3;"></div>
<div style="position:absolute;left:515px;top:286px;width:40px;height:1px;background:#808080;"></div>
<div style="position:absolute;left:554px;top:286px;width:1px;height:19px;background:#808080;"></div>
<div class="t" style="left:558px;top:111.84px;font-size:12px;line-height:12px;color:#212121;font-weight:bold;text-align:left;">Track ID</div>
<div class="t" style="left:639px;top:111.84px;font-size:12px;line-height:12px;color:#212121;font-weight:bold;text-align:left;">Intersection Point ...</div>
<div class="t" style="left:771px;top:111.84px;font-size:12px;line-height:12px;color:#212121;font-weight:bold;text-align:left;">Ego Arrival Time to Intersection (s...</div>
<div class="t" style="left:991px;top:111.84px;width:29px;font-size:12px;line-height:12px;color:#212121;font-weight:bold;text-align:left;">Target-Ego</div>
<div class="t" style="left:513.5px;top:134.60px;width:39px;font-size:13px;line-height:13px;color:#6a6a6a;font-weight:normal;text-align:center;">1</div>
<div class="t" style="left:559px;top:135.00px;font-size:13px;line-height:13px;color:#212121;font-weight:normal;text-align:left;">1</div>
<div class="t" style="left:640px;top:135.00px;font-size:13px;line-height:13px;color:#212121;font-weight:normal;text-align:left;">19.51, 61.64</div>
<div class="t" style="left:772px;top:135.00px;font-size:13px;line-height:13px;color:#212121;font-weight:normal;text-align:left;">1.42</div>
<div class="t" style="left:992px;top:135.00px;font-size:13px;line-height:13px;color:#212121;font-weight:normal;text-align:left;">5.66</div>
<div style="position:absolute;left:514px;top:487px;width:508px;height:202px;background:#ffffff;"></div>
<div style="position:absolute;left:514px;top:487px;width:508px;height:1px;background:#808080;"></div>
<div style="position:absolute;left:514px;top:688px;width:508px;height:1px;background:#808080;"></div>
<div style="position:absolute;left:514px;top:487px;width:1px;height:202px;background:#808080;"></div>
<div style="position:absolute;left:1021px;top:487px;width:1px;height:202px;background:#808080;"></div>
<div style="position:absolute;left:515px;top:488px;width:506px;height:26px;background:#f3f3f3;"></div>
<div style="position:absolute;left:515px;top:514px;width:506px;height:1px;background:#808080;"></div>
<div style="position:absolute;left:515px;top:515px;width:39px;height:156px;background:#f3f3f3;"></div>
<div style="position:absolute;left:555px;top:515px;width:449px;height:24px;background:#ffffff;"></div>
<div style="position:absolute;left:515px;top:539px;width:489px;height:1px;background:#808080;"></div>
<div style="position:absolute;left:555px;top:540px;width:449px;height:24px;background:#f4f4f4;"></div>
<div style="position:absolute;left:515px;top:564px;width:489px;height:1px;background:#808080;"></div>
<div style="position:absolute;left:555px;top:565px;width:449px;height:24px;background:#ffffff;"></div>
<div style="position:absolute;left:515px;top:589px;width:489px;height:1px;background:#808080;"></div>
<div style="position:absolute;left:555px;top:590px;width:449px;height:24px;background:#f4f4f4;"></div>
<div style="position:absolute;left:515px;top:614px;width:489px;height:1px;background:#808080;"></div>
<div style="position:absolute;left:555px;top:615px;width:449px;height:23px;background:#ffffff;"></div>
<div style="position:absolute;left:515px;top:638px;width:489px;height:1px;background:#808080;"></div>
<div style="position:absolute;left:555px;top:639px;width:449px;height:24px;background:#f4f4f4;"></div>
<div style="position:absolute;left:515px;top:663px;width:489px;height:1px;background:#808080;"></div>
<div style="position:absolute;left:515px;top:670px;width:39px;height:1px;background:#808080;"></div>
<div style="position:absolute;left:554px;top:487px;width:1px;height:185px;background:#808080;"></div>
<div style="position:absolute;left:655px;top:487px;width:1px;height:185px;background:#808080;"></div>
<div style="position:absolute;left:795px;top:487px;width:1px;height:185px;background:#808080;"></div>
<div style="position:absolute;left:935px;top:487px;width:1px;height:185px;background:#808080;"></div>
<div style="position:absolute;left:1004px;top:487px;width:1px;height:28px;background:#808080;"></div>
<div style="position:absolute;left:1005px;top:515px;width:16px;height:157px;background:#f0f0f0;"></div>
<svg style="position:absolute;left:0;top:0;pointer-events:none" width="1024" height="922"><polygon points="1008.9,525.3 1016.1,525.3 1012.5,521.7" fill="#a6a6a6"/></svg>
<div style="position:absolute;left:1006px;top:532px;width:13px;height:111px;background:#c2c2c2;"></div>
<svg style="position:absolute;left:0;top:0;pointer-events:none" width="1024" height="922"><polygon points="1008.9,661.2 1016.1,661.2 1012.5,664.8" fill="#505050"/></svg>
<div style="position:absolute;left:555px;top:672px;width:450px;height:16px;background:#f0f0f0;"></div>
<svg style="position:absolute;left:0;top:0;pointer-events:none" width="1024" height="922"><polygon points="564.8,676.4 564.8,683.6 561.2,680.0" fill="#a6a6a6"/></svg>
<div style="position:absolute;left:572px;top:674px;width:256px;height:13px;background:#c2c2c2;"></div>
<div style="position:absolute;left:1005px;top:672px;width:16px;height:16px;background:#dcdcdc;"></div>
<svg style="position:absolute;left:0;top:0;pointer-events:none" width="1024" height="922"><polygon points="994.2,676.4 994.2,683.6 997.8,680.0" fill="#505050"/></svg>
<div style="position:absolute;left:515px;top:671px;width:39px;height:17px;background:#f3f3f3;"></div>
<div style="position:absolute;left:554px;top:670px;width:1px;height:19px;background:#808080;"></div>
<div class="t" style="left:558px;top:495.84px;font-size:12px;line-height:12px;color:#212121;font-weight:bold;text-align:left;">Target ID</div>
<div class="t" style="left:659px;top:495.84px;font-size:12px;line-height:12px;color:#212121;font-weight:bold;text-align:left;">Message Transmitte...</div>
<div class="t" style="left:799px;top:495.84px;font-size:12px;line-height:12px;color:#212121;font-weight:bold;text-align:left;">Message Received b...</div>
<div class="t" style="left:939px;top:495.84px;font-size:12px;line-height:12px;color:#212121;font-weight:bold;text-align:left;">Target-Ego</div>
<div class="t" style="left:513.5px;top:519.30px;width:39px;font-size:13px;line-height:13px;color:#6a6a6a;font-weight:normal;text-align:center;">1</div>
<div class="t" style="left:600px;top:519.30px;width:52px;font-size:13px;line-height:13px;color:#212121;font-weight:normal;text-align:right;">2</div>
<div style="position:absolute;left:719px;top:518px;width:14px;height:14px;background:#ffffff;border:1px solid #c6c6c6;"></div>
<svg style="position:absolute;left:719px;top:518px" width="14" height="14"><polyline points="2.5,7 5.5,10 11.5,3.5" fill="none" stroke="#acacac" stroke-width="2"/></svg>
<div style="position:absolute;left:859px;top:518px;width:14px;height:14px;background:#ffffff;border:1px solid #c6c6c6;"></div>
<svg style="position:absolute;left:859px;top:518px" width="14" height="14"><polyline points="2.5,7 5.5,10 11.5,3.5" fill="none" stroke="#acacac" stroke-width="2"/></svg>
<div class="t" style="left:513.5px;top:544.30px;width:39px;font-size:13px;line-height:13px;color:#6a6a6a;font-weight:normal;text-align:center;">2</div>
<div class="t" style="left:600px;top:544.30px;width:52px;font-size:13px;line-height:13px;color:#212121;font-weight:normal;text-align:right;">3</div>
<div style="position:absolute;left:719px;top:543px;width:14px;height:14px;background:#f4f4f4;border:1px solid #c6c6c6;"></div>
<svg style="position:absolute;left:719px;top:543px" width="14" height="14"><polyline points="2.5,7 5.5,10 11.5,3.5" fill="none" stroke="#acacac" stroke-width="2"/></svg>
<div style="position:absolute;left:859px;top:543px;width:14px;height:14px;background:#f4f4f4;border:1px solid #c6c6c6;"></div>
<div class="t" style="left:513.5px;top:569.30px;width:39px;font-size:13px;line-height:13px;color:#6a6a6a;font-weight:normal;text-align:center;">3</div>
<div class="t" style="left:600px;top:569.30px;width:52px;font-size:13px;line-height:13px;color:#212121;font-weight:normal;text-align:right;">4</div>
<div style="position:absolute;left:719px;top:568px;width:14px;height:14px;background:#ffffff;border:1px solid #c6c6c6;"></div>
<svg style="position:absolute;left:719px;top:568px" width="14" height="14"><polyline points="2.5,7 5.5,10 11.5,3.5" fill="none" stroke="#acacac" stroke-width="2"/></svg>
<div style="position:absolute;left:859px;top:568px;width:14px;height:14px;background:#ffffff;border:1px solid #c6c6c6;"></div>
<div class="t" style="left:513.5px;top:594.30px;width:39px;font-size:13px;line-height:13px;color:#6a6a6a;font-weight:normal;text-align:center;">4</div>
<div class="t" style="left:600px;top:594.30px;width:52px;font-size:13px;line-height:13px;color:#212121;font-weight:normal;text-align:right;">5</div>
<div style="position:absolute;left:719px;top:593px;width:14px;height:14px;background:#f4f4f4;border:1px solid #c6c6c6;"></div>
<svg style="position:absolute;left:719px;top:593px" width="14" height="14"><polyline points="2.5,7 5.5,10 11.5,3.5" fill="none" stroke="#acacac" stroke-width="2"/></svg>
<div style="position:absolute;left:859px;top:593px;width:14px;height:14px;background:#f4f4f4;border:1px solid #c6c6c6;"></div>
<div class="t" style="left:513.5px;top:619.30px;width:39px;font-size:13px;line-height:13px;color:#6a6a6a;font-weight:normal;text-align:center;">5</div>
<div class="t" style="left:600px;top:619.30px;width:52px;font-size:13px;line-height:13px;color:#212121;font-weight:normal;text-align:right;">6</div>
<div style="position:absolute;left:719px;top:618px;width:14px;height:14px;background:#ffffff;border:1px solid #c6c6c6;"></div>
<svg style="position:absolute;left:719px;top:618px" width="14" height="14"><polyline points="2.5,7 5.5,10 11.5,3.5" fill="none" stroke="#acacac" stroke-width="2"/></svg>
<div style="position:absolute;left:859px;top:618px;width:14px;height:14px;background:#ffffff;border:1px solid #c6c6c6;"></div>
<div class="t" style="left:513.5px;top:643.30px;width:39px;font-size:13px;line-height:13px;color:#6a6a6a;font-weight:normal;text-align:center;">6</div>
<div class="t" style="left:600px;top:643.30px;width:52px;font-size:13px;line-height:13px;color:#212121;font-weight:normal;text-align:right;">7</div>
<div style="position:absolute;left:719px;top:642px;width:14px;height:14px;background:#f4f4f4;border:1px solid #c6c6c6;"></div>
<svg style="position:absolute;left:719px;top:642px" width="14" height="14"><polyline points="2.5,7 5.5,10 11.5,3.5" fill="none" stroke="#acacac" stroke-width="2"/></svg>
<div style="position:absolute;left:859px;top:642px;width:14px;height:14px;background:#f4f4f4;border:1px solid #c6c6c6;"></div>
<div style="position:absolute;left:555px;top:664px;width:449px;height:8px;overflow:hidden;"><div class="t" style="left:45px;top:4px;width:52px;font-size:13px;line-height:13px;color:#212121;text-align:right">12</div><div style="position:absolute;left:164px;top:5px;width:14px;height:14px;border:1px solid #c6c6c6"></div><div style="position:absolute;left:304px;top:5px;width:14px;height:14px;border:1px solid #c6c6c6"></div></div>
<div style="position:absolute;left:514px;top:717px;width:508px;height:203px;background:#ffffff;"></div>
<div style="position:absolute;left:514px;top:717px;width:508px;height:1px;background:#808080;"></div>
<div style="position:absolute;left:514px;top:919px;width:508px;height:1px;background:#808080;"></div>
<div style="position:absolute;left:514px;top:717px;width:1px;height:203px;background:#808080;"></div>
<div style="position:absolute;left:1021px;top:717px;width:1px;height:203px;background:#808080;"></div>
<div style="position:absolute;left:515px;top:718px;width:506px;height:26px;background:#f3f3f3;"></div>
<div style="position:absolute;left:515px;top:744px;width:506px;height:1px;background:#808080;"></div>
<div style="position:absolute;left:515px;top:745px;width:39px;height:24px;background:#f3f3f3;"></div>
<div style="position:absolute;left:515px;top:769px;width:506px;height:1px;background:#808080;"></div>
<div style="position:absolute;left:554px;top:717px;width:1px;height:53px;background:#808080;"></div>
<div style="position:absolute;left:659px;top:717px;width:1px;height:53px;background:#808080;"></div>
<div style="position:absolute;left:763px;top:717px;width:1px;height:53px;background:#808080;"></div>
<div style="position:absolute;left:867px;top:717px;width:1px;height:53px;background:#808080;"></div>
<div style="position:absolute;left:971px;top:717px;width:1px;height:53px;background:#808080;"></div>
<div style="position:absolute;left:555px;top:902px;width:466px;height:17px;background:#f0f0f0;"></div>
<svg style="position:absolute;left:0;top:0;pointer-events:none" width="1024" height="922"><polygon points="564.8,906.9 564.8,914.1 561.2,910.5" fill="#a6a6a6"/></svg>
<div style="position:absolute;left:572px;top:904px;width:277px;height:13px;background:#c2c2c2;"></div>
<svg style="position:absolute;left:0;top:0;pointer-events:none" width="1024" height="922"><polygon points="1010.7,906.9 1010.7,914.1 1014.3,910.5" fill="#505050"/></svg>
<div style="position:absolute;left:515px;top:902px;width:39px;height:17px;background:#f3f3f3;"></div>
<div style="position:absolute;left:515px;top:901px;width:40px;height:1px;background:#808080;"></div>
<div style="position:absolute;left:554px;top:901px;width:1px;height:19px;background:#808080;"></div>
<div class="t" style="left:558px;top:725.84px;font-size:12px;line-height:12px;color:#212121;font-weight:bold;text-align:left;">Target ID</div>
<div class="t" style="left:663px;top:725.84px;font-size:12px;line-height:12px;color:#212121;font-weight:bold;text-align:left;">Latitude (deg)</div>
<div class="t" style="left:767px;top:725.84px;font-size:12px;line-height:12px;color:#212121;font-weight:bold;text-align:left;">Longitude (d...</div>
<div class="t" style="left:871px;top:725.84px;font-size:12px;line-height:12px;color:#212121;font-weight:bold;text-align:left;">Speed (m/s)</div>
<div class="t" style="left:975px;top:725.84px;width:45px;font-size:12px;line-height:12px;color:#212121;font-weight:bold;text-align:left;">Heading (deg)</div>
<div class="t" style="left:513.5px;top:748.60px;width:39px;font-size:13px;line-height:13px;color:#6a6a6a;font-weight:normal;text-align:center;">1</div>
<div class="t" style="left:559px;top:749.00px;font-size:13px;line-height:13px;color:#212121;font-weight:normal;text-align:left;">2</div>
<div class="t" style="left:664px;top:749.00px;font-size:13px;line-height:13px;color:#212121;font-weight:normal;text-align:left;">42.300052</div>
<div class="t" style="left:768px;top:749.00px;font-size:13px;line-height:13px;color:#212121;font-weight:normal;text-align:left;">-83.698267</div>
<div class="t" style="left:872px;top:749.00px;font-size:13px;line-height:13px;color:#212121;font-weight:normal;text-align:left;">7.2</div>
<div class="t" style="left:976px;top:749.00px;font-size:13px;line-height:13px;color:#212121;font-weight:normal;text-align:left;">268.5</div>
<div style="position:absolute;left:0px;top:0px;width:1024px;height:1px;background:#7f7f7f;"></div>
<div style="position:absolute;left:0px;top:0px;width:1px;height:922px;background:#7f7f7f;"></div>
<div style="position:absolute;left:1023px;top:0px;width:1px;height:922px;background:#7f7f7f;"></div>
<div style="position:absolute;left:0px;top:921px;width:1024px;height:1px;background:#7f7f7f;"></div>
<div style="position:absolute;left:511px;top:0px;width:2px;height:922px;background:#7f7f7f;"></div>
<div style="position:absolute;left:1px;top:24px;width:510px;height:1px;background:#8c8c8c;"></div>
<div style="position:absolute;left:0px;top:614px;width:511px;height:2px;background:#7f7f7f;"></div>
<div style="position:absolute;left:1px;top:639px;width:510px;height:1px;background:#8c8c8c;"></div>
<div style="position:absolute;left:513px;top:76px;width:511px;height:2px;background:#7f7f7f;"></div>
<div style="position:absolute;left:513px;top:306px;width:511px;height:2px;background:#7f7f7f;"></div>
<div style="position:absolute;left:513px;top:460px;width:511px;height:2px;background:#7f7f7f;"></div>
<div style="position:absolute;left:513px;top:691px;width:511px;height:2px;background:#7f7f7f;"></div>
<div style="position:absolute;left:513px;top:24px;width:510px;height:1px;background:#8c8c8c;"></div>
<div style="position:absolute;left:513px;top:101px;width:510px;height:1px;background:#8c8c8c;"></div>
<div style="position:absolute;left:513px;top:331px;width:510px;height:1px;background:#8c8c8c;"></div>
<div style="position:absolute;left:513px;top:485px;width:510px;height:1px;background:#8c8c8c;"></div>
<div style="position:absolute;left:513px;top:716px;width:510px;height:1px;background:#8c8c8c;"></div>
<div class="t" style="left:4px;top:2.79px;font-size:18.8px;line-height:18.8px;color:#000;-webkit-text-stroke:0.35px #000;">Scene View</div>
<div class="t" style="left:4px;top:617.79px;font-size:18.8px;line-height:18.8px;color:#000;-webkit-text-stroke:0.35px #000;">Chase View</div>
<div class="t" style="left:515px;top:2.79px;font-size:18.8px;line-height:18.8px;color:#000;-webkit-text-stroke:0.35px #000;">IMA Warning</div>
<div class="t" style="left:515px;top:79.79px;font-size:18.8px;line-height:18.8px;color:#000;-webkit-text-stroke:0.35px #000;">Intersection Points</div>
<div class="t" style="left:515px;top:309.79px;font-size:18.8px;line-height:18.8px;color:#000;-webkit-text-stroke:0.35px #000;">Message Transmitted vs Received</div>
<div class="t" style="left:515px;top:463.79px;font-size:18.8px;line-height:18.8px;color:#000;-webkit-text-stroke:0.35px #000;">V2V Communication Data</div>
<div class="t" style="left:515px;top:694.79px;font-size:18.8px;line-height:18.8px;color:#000;-webkit-text-stroke:0.35px #000;">Received BSM Message</div>
</body></html>
